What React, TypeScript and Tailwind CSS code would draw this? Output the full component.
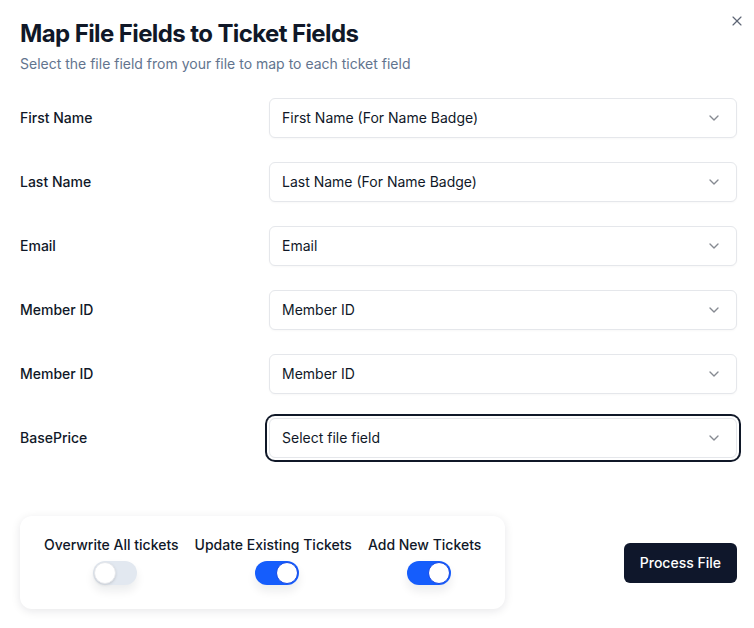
import { useState } from "react";
import { ChevronDown, X } from "lucide-react";

const fields = [
  { label: "First Name", value: "First Name (For Name Badge)" },
  { label: "Last Name", value: "Last Name (For Name Badge)" },
  { label: "Email", value: "Email" },
  { label: "Member ID", value: "Member ID" },
  { label: "Member ID", value: "Member ID" },
  { label: "BasePrice", value: "" },
];

function Toggle({ on, onChange }: { on: boolean; onChange: () => void }) {
  return (
    <button
      type="button"
      onClick={onChange}
      className={`relative ml-2 flex h-6 w-11 items-center rounded-full shadow-[0_6px_10px_rgba(15,23,42,0.08)] ${on ? "bg-blue-600" : "bg-slate-200"}`}
    >
      <span
        className={`absolute top-px h-[22px] w-[22px] rounded-full border bg-white ${on ? "left-[21px] border-blue-700" : "left-px border-gray-200 shadow-sm"}`}
      />
    </button>
  );
}

export default function App() {
  const [overwrite, setOverwrite] = useState(false);
  const [update, setUpdate] = useState(true);
  const [addNew, setAddNew] = useState(true);

  return (
    <div className="relative min-h-[628px] w-[754px] bg-white pl-5 pr-[17px] pt-[18px] text-gray-900 [font-family:Inter,'Liberation_Sans',sans-serif]">
      <button className="absolute right-[9px] top-[13px] text-gray-700 opacity-80">
        <X className="h-4 w-4" strokeWidth={1.75} />
      </button>

      <div className="flex flex-col gap-1">
        <h2 className="text-2xl font-bold tracking-tight">Map File Fields to Ticket Fields</h2>
        <p className="text-sm text-slate-500">Select the file field from your file to map to each ticket field</p>
      </div>

      <div className="mt-6 flex flex-col gap-6">
        {fields.map((f, i) => (
          <div key={i} className="grid grid-cols-[233px_1fr] items-center gap-4">
            <div className="text-sm font-medium">{f.label}</div>
            <button
              type="button"
              className={`flex h-10 w-full items-center justify-between rounded-md border border-gray-200 bg-white pl-3 pr-[14px] text-sm shadow-[0_1px_2px_rgba(0,0,0,0.03)] ${f.value ? "" : "ring-2 ring-gray-900 ring-offset-2"}`}
            >
              <span>{f.value || "Select file field"}</span>
              <ChevronDown className="h-4 w-4 opacity-50" />
            </button>
          </div>
        ))}
      </div>

      <div className="mt-[58px] flex items-center justify-between">
        <div className="flex gap-4 rounded-xl bg-white px-6 pb-6 pt-[19px] shadow-[0_2px_10px_rgba(15,23,42,0.1)]">
          <div className="flex flex-col items-center gap-1.5">
            <span className="text-sm font-medium">Overwrite All tickets</span>
            <Toggle on={overwrite} onChange={() => setOverwrite(!overwrite)} />
          </div>
          <div className="flex flex-col items-center gap-1.5">
            <span className="text-sm font-medium">Update Existing Tickets</span>
            <Toggle on={update} onChange={() => setUpdate(!update)} />
          </div>
          <div className="flex flex-col items-center gap-1.5">
            <span className="text-sm font-medium">Add New Tickets</span>
            <Toggle on={addNew} onChange={() => setAddNew(!addNew)} />
          </div>
        </div>
        <button className="h-10 rounded-md bg-slate-900 px-4 text-sm font-medium text-white">Process File</button>
      </div>
    </div>
  );
}
